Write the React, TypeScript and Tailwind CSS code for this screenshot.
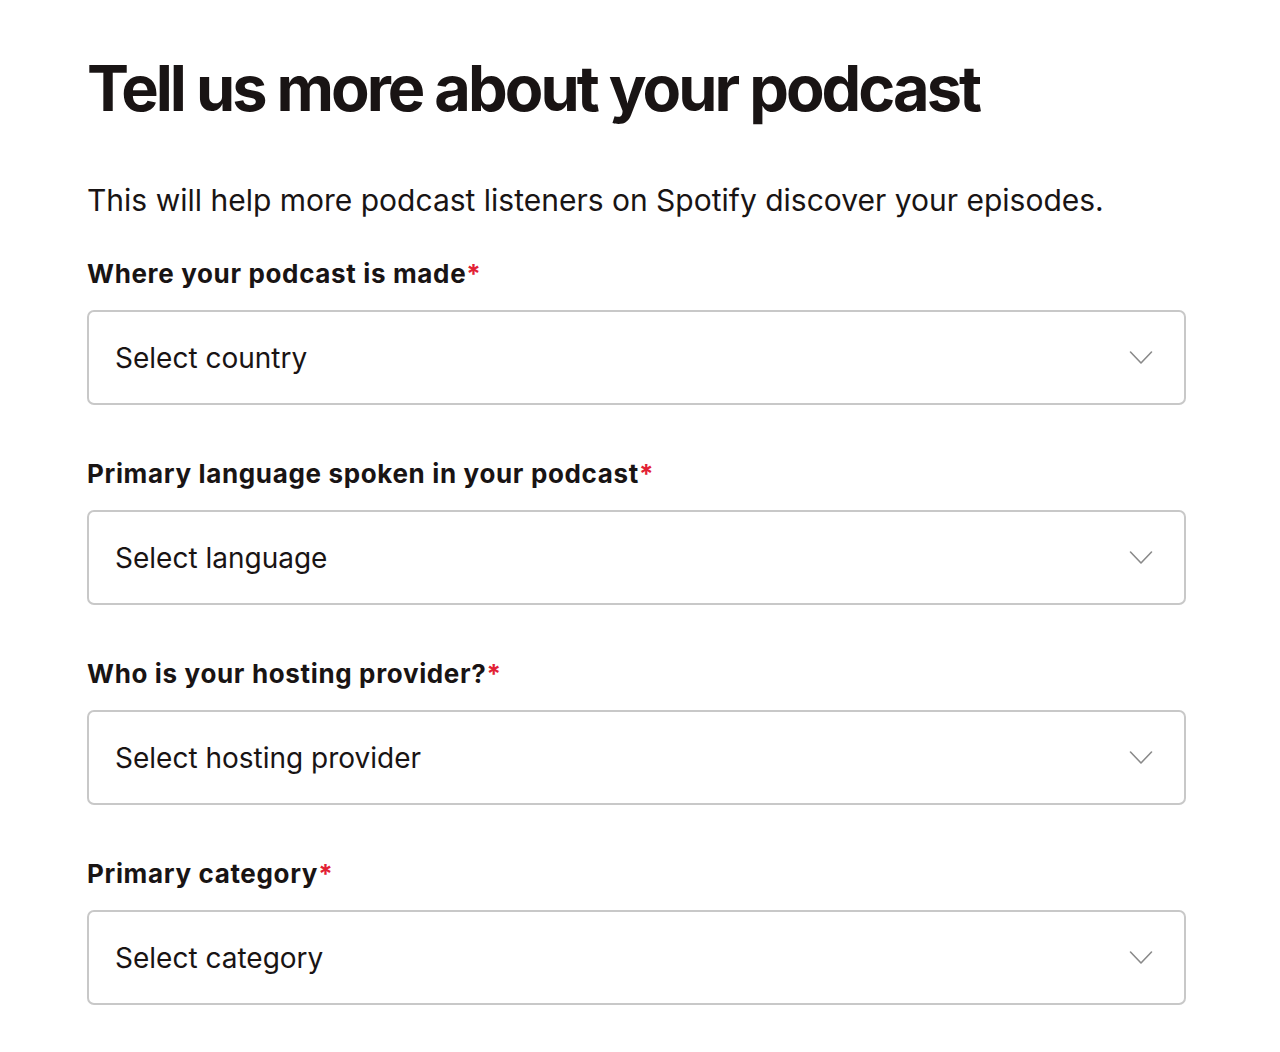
import React from "react";

const fields = [
  { label: "Where your podcast is made", placeholder: "Select country" },
  { label: "Primary language spoken in your podcast", placeholder: "Select language" },
  { label: "Who is your hosting provider?", placeholder: "Select hosting provider" },
  { label: "Primary category", placeholder: "Select category" },
];

function Chevron() {
  return (
    <svg width="24" height="15" viewBox="0 0 24 15" fill="none" className="shrink-0">
      <polyline
        points="1.5,2 12,13 22.5,2"
        stroke="#8a8a8a"
        strokeWidth="1.6"
        strokeLinecap="round"
        strokeLinejoin="round"
      />
    </svg>
  );
}

export default function App() {
  return (
    <div
      className="min-h-screen bg-white text-[#191414] px-[87px] pt-[48px]"
      style={{ fontFamily: "Inter, 'Noto Sans', sans-serif" }}
    >
      <h1 className="text-[63px] leading-[80px] font-bold tracking-[-0.047em]">
        Tell us more about your podcast
      </h1>

      <p className="mt-[52px] text-[30px] leading-[40px]">
        This will help more podcast listeners on Spotify discover your episodes.
      </p>

      <div className="mt-[36px] flex flex-col gap-[51px] w-[1099px]">
        {fields.map((f) => (
          <div key={f.label} className="flex flex-col">
            <label className="text-[26px] leading-[36px] font-bold tracking-[0.025em]">
              {f.label}
              <span className="text-[#e22134]">*</span>
            </label>
            <div className="mt-[18px] h-[95px] flex items-center justify-between rounded-[7px] border-2 border-[#c8c8c8] pl-[26px] pr-[31px]">
              <span className="text-[28px]">{f.placeholder}</span>
              <Chevron />
            </div>
          </div>
        ))}
      </div>
    </div>
  );
}
